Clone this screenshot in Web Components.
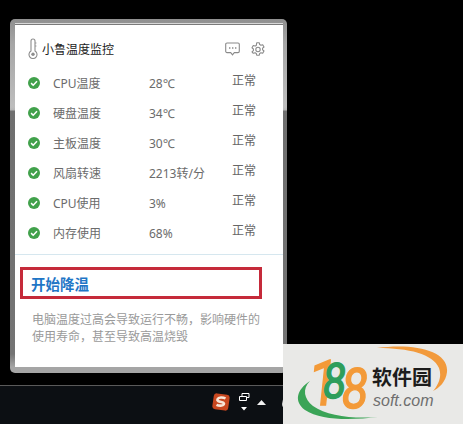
<!DOCTYPE html>
<html>
<head>
<meta charset="utf-8">
<title>小鲁温度监控</title>
<style>
  html, body { margin: 0; height: 100%; background: #000; overflow: hidden; }
  body { font-family: "Noto Sans", "Noto Sans CJK SC", sans-serif; }
</style>
</head>
<body>
<desk-screen>
  <monitor-window>
    <monitor-header slot="header">小鲁温度监控</monitor-header>
    <status-row><span slot="label">CPU温度</span><span slot="value">28℃</span></status-row>
    <status-row><span slot="label">硬盘温度</span><span slot="value">34℃</span></status-row>
    <status-row><span slot="label">主板温度</span><span slot="value">30℃</span></status-row>
    <status-row><span slot="label">风扇转速</span><span slot="value">2213转/分</span></status-row>
    <status-row><span slot="label">CPU使用</span><span slot="value">3%</span></status-row>
    <status-row><span slot="label">内存使用</span><span slot="value">68%</span></status-row>
    <cool-action slot="footer">
      开始降温
      <span slot="note">电脑温度过高会导致运行不畅，影响硬件的使用寿命，甚至导致高温烧毁</span>
    </cool-action>
  </monitor-window>
  <task-bar></task-bar>
  <soft-mark></soft-mark>
</desk-screen>

<script>
class DeskScreen extends HTMLElement {
  constructor() {
    super();
    this.attachShadow({ mode: "open" });
    this.shadowRoot.innerHTML = `
      <style>
        :host {
          display: flex;
          flex-direction: column;
          position: relative;
          width: 463px;
          height: 424px;
          padding: 19px 0 0 10px;
          box-sizing: border-box;
          background: #000;
          overflow: hidden;
        }
      </style>
      <slot></slot>`;
  }
}

class MonitorWindow extends HTMLElement {
  constructor() {
    super();
    this.attachShadow({ mode: "open" });
    this.shadowRoot.innerHTML = `
      <style>
        :host {
          display: block;
          flex: none;
          width: 277px;
          height: 354px;
          box-sizing: border-box;
          padding: 6px 4px 6px 5px;
          border-radius: 5px;
          background: linear-gradient(#8f8f8f 0, #a6a6a6 25px, #bdbdbd 88px, #b4b4b4 91px, #6f6f6f 92px, #747474 335px, #a5a5a5 348px);
        }
        .inner {
          display: flex;
          flex-direction: column;
          height: 100%;
          background: #fff;
          box-shadow: 0 -1px 0 #7a7a7a, 0 -2px 0 #d8d8d8;
        }
        .rows { display: flex; flex-direction: column; }
        .rows ::slotted(status-row) { flex: none; }
      </style>
      <div class="inner">
        <slot name="header"></slot>
        <div class="rows"><slot></slot></div>
        <slot name="footer"></slot>
      </div>`;
  }
}

class MonitorHeader extends HTMLElement {
  constructor() {
    super();
    this.attachShadow({ mode: "open" });
    this.shadowRoot.innerHTML = `
      <style>
        :host {
          display: flex;
          align-items: center;
          flex: none;
          box-sizing: border-box;
          height: 43px;
          padding: 4px 18px 0 13px;
          font-size: 12px;
          color: #222;
        }
        .title { flex: 1; margin-left: 4px; }
        svg { display: block; flex: none; }
        .icons { display: flex; gap: 11px; align-items: center; }
      </style>
      <svg width="10" height="21" viewBox="0 0 10 21" fill="none" stroke="#8c8c8c" stroke-width="1.1">
        <path d="M3 13V3a2 2 0 0 1 4 0v10a4 4 0 1 1-4 0z"/>
        <circle cx="5" cy="16.2" r="1.7" fill="#8c8c8c" stroke="none"/>
        <path d="M7 5h1.5M7 8h1.5" stroke-width=".8"/>
      </svg>
      <span class="title"><slot></slot></span>
      <div class="icons">
        <svg width="15" height="14" viewBox="0 0 15 14" fill="none" stroke="#8a8a8a" stroke-width="1.1">
          <path d="M2 1h11a1.3 1.3 0 0 1 1.3 1.3v7A1.3 1.3 0 0 1 13 10.600H9.300L7.500 12.800 5.700 10.600H2A1.300 1.300 0 0 1 .7 9.300v-7A1.300 1.300 0 0 1 2 1z"/>
          <path d="M4 6h1.400M7 6h1.400M10 6h1.400" stroke-width="1.300"/>
        </svg>
        <svg width="14" height="14" viewBox="0 0 14 14" fill="none" stroke="#8a8a8a" stroke-width="1.1">
          <path d="M5.700 .8h2.600l.4 1.800 1.200.7 1.800-.6 1.300 2.300-1.400 1.200v1.600l1.400 1.200-1.300 2.300-1.800-.6-1.200.7-.4 1.800H5.700l-.4-1.800-1.200-.7-1.800.6L1 9.800 2.400 8.600V7L1 5.800l1.300-2.300 1.800.6 1.200-.7z" stroke-linejoin="round"/>
          <circle cx="7" cy="7.500" r="2.200"/>
        </svg>
      </div>`;
  }
}

class StatusRow extends HTMLElement {
  constructor() {
    super();
    this.attachShadow({ mode: "open" });
    this.shadowRoot.innerHTML = `
      <style>
        :host {
          display: grid;
          grid-template-columns: 25px 96px 83px auto;
          align-items: center;
          height: 30px;
          padding-left: 13px;
          font-size: 12px;
          color: #6b6b6b;
        }
        svg { display: block; }
        .status { padding-bottom: 6px; color: #666; }
      </style>
      <svg width="12" height="12" viewBox="0 0 12 12">
        <circle cx="6" cy="6" r="6" fill="#41a14b"/>
        <path d="M3.100 6.100 5.200 8.200 9 4.200" fill="none" stroke="#fff" stroke-width="1.500"/>
      </svg>
      <span><slot name="label"></slot></span>
      <span><slot name="value"></slot></span>
      <span class="status">正常</span>`;
  }
}

class CoolAction extends HTMLElement {
  constructor() {
    super();
    this.attachShadow({ mode: "open" });
    this.shadowRoot.innerHTML = `
      <style>
        :host { display: block; flex: 1; margin-top: 6px; border-top: 1px solid #d6e7ef; }
        .action {
          display: flex;
          align-items: center;
          box-sizing: border-box;
          width: 242px;
          height: 32px;
          margin: 12px 0 0 5px;
          padding-left: 8px;
          border: 3px solid #c52a3a;
          font-size: 14.500px;
          font-weight: 700;
          color: #1f76c6;
        }
        .note {
          width: 232px;
          margin: 12px 0 0 17px;
          font-size: 12px;
          line-height: 17px;
          color: #9a9a9a;
        }
      </style>
      <div class="action"><slot></slot></div>
      <div class="note"><slot name="note"></slot></div>`;
  }
}

class TaskBar extends HTMLElement {
  constructor() {
    super();
    this.attachShadow({ mode: "open" });
    this.shadowRoot.innerHTML = `
      <style>
        :host {
          display: flex;
          align-items: center;
          flex: none;
          margin: 12px 0 0 -10px;
          height: 39px;
          box-sizing: border-box;
          padding: 0 0 6px 212px;
          border-top: 1px solid #5a5a5a;
          background: #0c0f13;
        }
        svg { display: block; flex: none; }
      </style>
      <svg width="18" height="18" viewBox="0 0 18 18">
        <rect x="1" y="1" width="16" height="16" rx="3" fill="#c8471f" transform="rotate(8 9 9)"/>
        <path d="M13.500 5.500C11 4 6.500 4 5.500 6.200 4.800 8 7 8.600 9 9c2 .4 3.600 1 2.800 2.500C11 13 7 13 4.500 11.800" fill="none" stroke="#f7e6d8" stroke-width="2.600"/>
      </svg>
      <svg style="margin-left:8px" width="12" height="22" viewBox="0 0 12 22">
        <path d="M1.500 5.500h7v4h-7zM4 5.500V2.500h7v4H8.500" fill="none" stroke="#fff"/>
        <path d="M3 16h6l-3 3.500z" fill="#fff"/>
      </svg>
      <svg style="margin-left:7px" width="9" height="5" viewBox="0 0 9 5"><path d="M0 5 4.500 0 9 5z" fill="#f2f2f2"/></svg>
      <svg style="margin-left:16px" width="4" height="14" viewBox="0 0 4 14"><path d="M3.500 1C2 3 .8 6 .8 9c0 2 1 3.500 2.700 4" fill="none" stroke="#e8e8e8" stroke-width="1.400"/></svg>`;
  }
}

class SoftMark extends HTMLElement {
  constructor() {
    super();
    this.attachShadow({ mode: "open" });
    this.shadowRoot.innerHTML = `
      <style>
        :host {
          display: block;
          position: absolute;
          right: 0;
          bottom: 0;
          width: 180px;
          height: 80px;
          background: #e9e9e7;
        }
        svg { display: block; }
        .n { font-family: Roboto, sans-serif; stroke-width: 1.500; }
        .cn { font-family: "Noto Sans CJK SC", sans-serif; font-weight: 700; font-size: 20px; fill: #1c1c1c; }
        .en { font-family: "Liberation Sans", sans-serif; font-style: italic; font-size: 16px; fill: #6f6f6f; }
      </style>
      <svg width="180" height="80" viewBox="0 0 180 80">
        <path d="M94 4C130-1 166 6 164 28 163 38 156 44 150 47 156 40 159 32 156 24 150 10 126 4 94 4z" fill="#f29a3c"/>
        <path d="M27 37C13 46 11 58 22 66 38 77 70 76 95 73 70 75 44 72 30 62 21 55 19 45 27 37z" fill="#3ba457"/>
        <text class="n" transform="translate(6 0) skewX(-6) scale(.85 1)"><tspan x="28" y="61" font-size="63" fill="#f39a38" stroke="#f39a38">1</tspan><tspan x="44.700" y="54" font-size="49" fill="#2e9e5b" stroke="#2e9e5b">8</tspan><tspan x="67.600" y="64" font-size="56" fill="#f39a38" stroke="#f39a38">8</tspan></text>
        <text class="cn" x="89" y="41">软件园</text>
        <text class="en" x="90" y="62">soft.com</text>
      </svg>`;
  }
}

customElements.define("desk-screen", DeskScreen);
customElements.define("monitor-window", MonitorWindow);
customElements.define("monitor-header", MonitorHeader);
customElements.define("status-row", StatusRow);
customElements.define("cool-action", CoolAction);
customElements.define("task-bar", TaskBar);
customElements.define("soft-mark", SoftMark);
</script>
</body>
</html>
